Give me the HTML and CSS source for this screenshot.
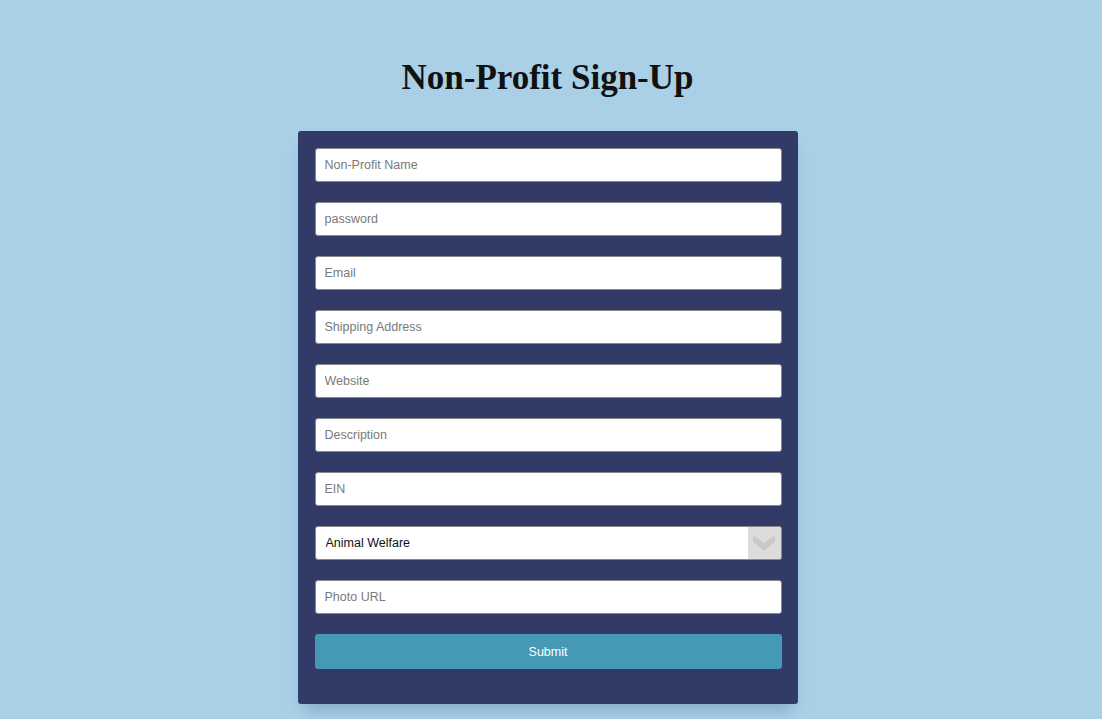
FILE: index.html
```html
<!DOCTYPE html>
<html lang="en">
<head>
    <meta charset="UTF-8">
    <meta name="viewport" content="width=device-width, initial-scale=1.0">
    <title>Non-Profit Sign-Up</title>
    <link rel="stylesheet" href="styles.css">
</head>
<body>
    <h1 class="page-title">Non-Profit Sign-Up</h1>

    <form class="signup-form" onsubmit="return false;">
        <input type="text" class="form-input" placeholder="Non-Profit Name">
        <input type="password" class="form-input" placeholder="password">
        <input type="email" class="form-input" placeholder="Email">
        <input type="text" class="form-input" placeholder="Shipping Address">
        <input type="text" class="form-input" placeholder="Website">
        <input type="text" class="form-input" placeholder="Description">
        <input type="text" class="form-input" placeholder="EIN">

        <div class="select-wrap">
            <select class="form-select">
                <option>Animal Welfare</option>
                <option>Education</option>
                <option>Environment</option>
                <option>Health</option>
            </select>
            <span class="select-arrow">
                <svg width="22" height="16" viewBox="0 0 22 16">
                    <polygon points="0,0 11,8 22,0 22,7 11,16 0,7" fill="#c9c9c9"/>
                </svg>
            </span>
        </div>

        <input type="text" class="form-input" placeholder="Photo URL">

        <button type="submit" class="submit-button">Submit</button>
    </form>
</body>
</html>
```

FILE: styles.css
```css
body {
    margin: 0;
    padding-right: 7px;
    background-color: #a9d0e6;
    font-family: "Liberation Sans", Arial, sans-serif;
}
.page-title {
    margin: 58px 0 33px;
    text-align: center;
    font-family: "Liberation Serif", "Times New Roman", serif;
    font-size: 35px;
    font-weight: bold;
    color: #111;
}
.signup-form {
    width: 500px;
    margin: 0 auto 15px;
    box-sizing: border-box;
    padding: 17px 16px 35px 17px;
    background-color: #323a68;
    border-radius: 3px;
    display: flex;
    flex-direction: column;
    gap: 20px;
    box-shadow: 0 12px 14px -6px rgba(60, 110, 140, 0.35);
}
.form-input {
    height: 34px;
    box-sizing: border-box;
    padding: 0 9px;
    border: 1px solid #8a8a8a;
    border-radius: 3px;
    background: #fff;
    font-family: inherit;
    font-size: 12.5px;
    color: #222;
    outline: none;
}
.form-input::placeholder {
    color: #7a7a7a;
}
.select-wrap {
    position: relative;
    height: 34px;
}
.form-select {
    width: 100%;
    height: 34px;
    box-sizing: border-box;
    padding: 0 10px;
    border: 1px solid #8a8a8a;
    border-radius: 3px;
    background: #fff;
    font-family: inherit;
    font-size: 12.5px;
    color: #111;
    appearance: none;
    -webkit-appearance: none;
    outline: none;
}
.select-arrow {
    position: absolute;
    top: 1px;
    right: 1px;
    width: 33px;
    height: 32px;
    background: #dcdcdc;
    border-radius: 0 2px 2px 0;
    display: flex;
    align-items: center;
    justify-content: center;
    pointer-events: none;
}
.select-arrow svg {
    display: block;
}
.submit-button {
    height: 35px;
    border: none;
    border-radius: 3px;
    background-color: #4599b4;
    color: #fff;
    font-family: inherit;
    font-size: 12.5px;
    cursor: pointer;
}
```
